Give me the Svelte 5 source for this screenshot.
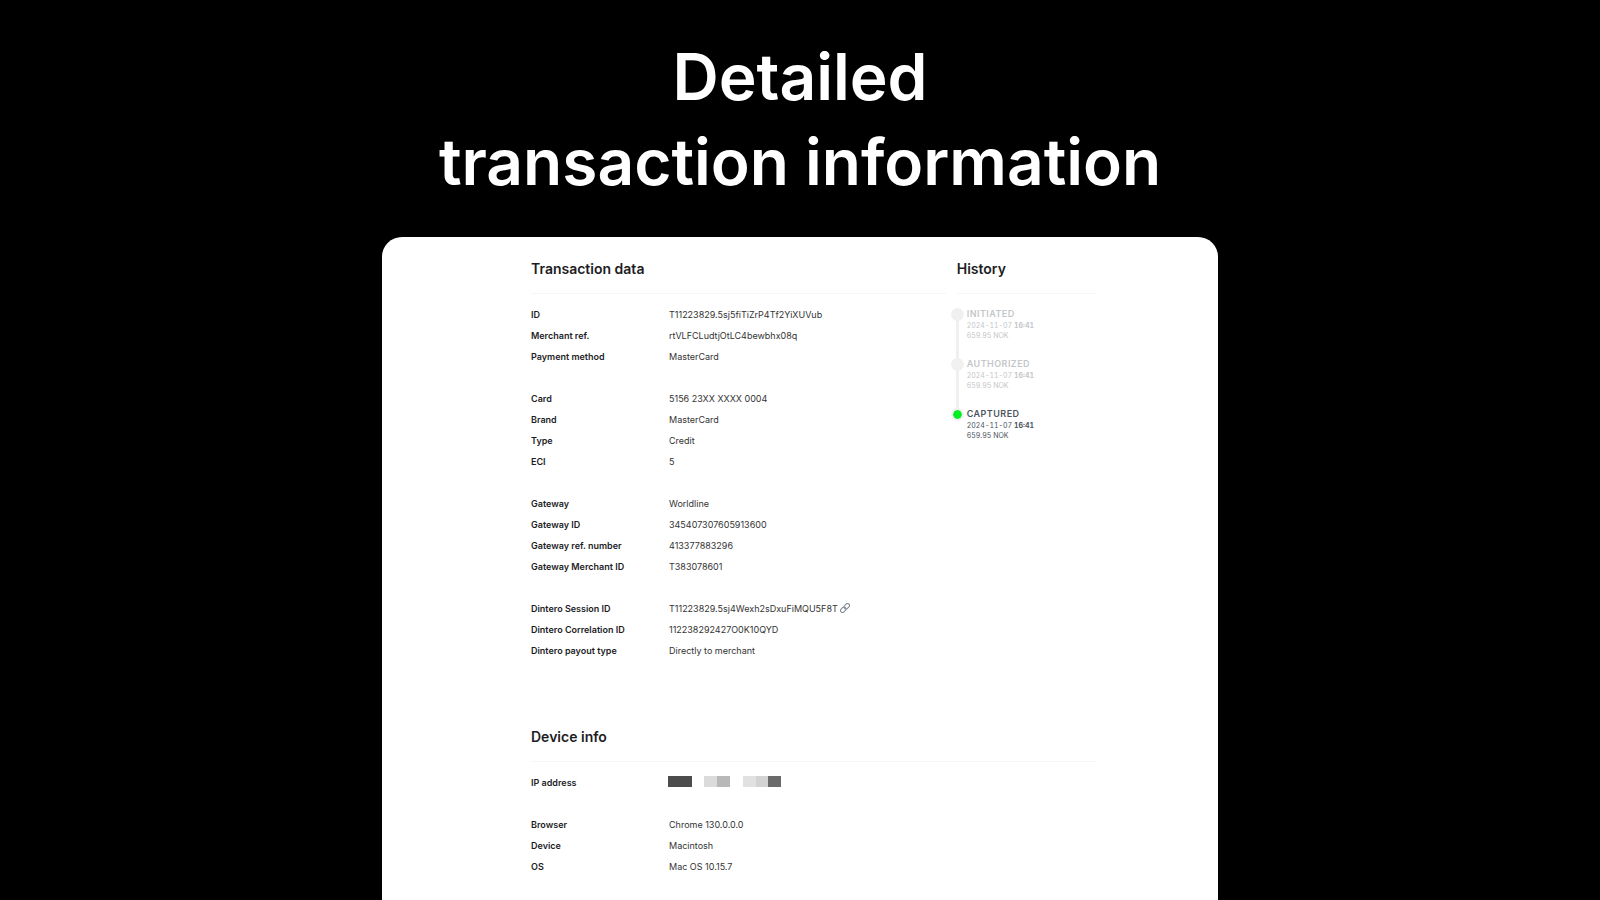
<script lang="ts">
  interface Row {
    label: string;
    value: string;
    link?: boolean;
    masked?: boolean;
  }

  const transaction: Row[][] = [
    [
      { label: "ID", value: "T11223829.5sj5fiTiZrP4Tf2YiXUVub" },
      { label: "Merchant ref.", value: "rtVLFCLudtjOtLC4bewbhx08q" },
      { label: "Payment method", value: "MasterCard" },
    ],
    [
      { label: "Card", value: "5156 23XX XXXX 0004" },
      { label: "Brand", value: "MasterCard" },
      { label: "Type", value: "Credit" },
      { label: "ECI", value: "5" },
    ],
    [
      { label: "Gateway", value: "Worldline" },
      { label: "Gateway ID", value: "345407307605913600" },
      { label: "Gateway ref. number", value: "413377883296" },
      { label: "Gateway Merchant ID", value: "T383078601" },
    ],
    [
      { label: "Dintero Session ID", value: "T11223829.5sj4Wexh2sDxuFiMQU5F8T", link: true },
      { label: "Dintero Correlation ID", value: "112238292427O0K10QYD" },
      { label: "Dintero payout type", value: "Directly to merchant" },
    ],
  ];

  const device: Row[][] = [
    [{ label: "IP address", value: "", masked: true }],
    [
      { label: "Browser", value: "Chrome 130.0.0.0" },
      { label: "Device", value: "Macintosh" },
      { label: "OS", value: "Mac OS 10.15.7" },
    ],
  ];

  const history = [
    { status: "INITIATED", date: "2024-11-07", time: "16:41", amount: "659.95 NOK" },
    { status: "AUTHORIZED", date: "2024-11-07", time: "16:41", amount: "659.95 NOK" },
    { status: "CAPTURED", date: "2024-11-07", time: "16:41", amount: "659.95 NOK", current: true },
  ];
</script>

{#snippet details(groups: Row[][])}
  <div class="groups">
    {#each groups as rows}
      <dl>
        {#each rows as row}
          <div class="row">
            <dt>{row.label}</dt>
            <dd>
              {#if row.masked}
                <svg class="mask" width="114" height="11" viewBox="0 0 114 11" aria-hidden="true">
                  <rect width="24" height="11" fill="#4c4c4c" />
                  <rect x="36" width="13" height="11" fill="#dbdbdb" />
                  <rect x="49" width="13" height="11" fill="#b8b8b8" />
                  <rect x="75" width="13" height="11" fill="#e1e1e1" />
                  <rect x="88" width="12" height="11" fill="#d3d3d3" />
                  <rect x="100" width="13" height="11" fill="#6a6a6a" />
                </svg>
              {:else if row.link}
                <a href="#session">
                  {row.value}
                  <svg width="10" height="10" viewBox="0 0 20 20" fill="none" aria-hidden="true">
                    <g transform="rotate(-45 10 10)" stroke="#7f8890" stroke-width="2">
                      <rect x="-1" y="6" width="12" height="8" rx="4" />
                      <rect x="9" y="6" width="12" height="8" rx="4" />
                    </g>
                  </svg>
                </a>
              {:else}
                {row.value}
              {/if}
            </dd>
          </div>
        {/each}
      </dl>
    {/each}
  </div>
{/snippet}

<main>
  <h1>Detailed<br />transaction information</h1>

  <div class="card">
    <div class="top">
      <section>
        <h2>Transaction data</h2>
        {@render details(transaction)}
      </section>

      <section>
        <h2>History</h2>
        <ol>
          {#each history as event}
            <li class:current={event.current}>
              <span class="dot"></span>
              <h3>{event.status}</h3>
              <p>{event.date} <strong>{event.time}</strong></p>
              <p>{event.amount}</p>
            </li>
          {/each}
        </ol>
      </section>
    </div>

    <section>
      <h2>Device info</h2>
      {@render details(device)}
    </section>
  </div>
</main>

<style>
  :global(body) {
    background: #000;
  }

  main {
    box-sizing: border-box;
    display: flex;
    flex-direction: column;
    align-items: center;
    height: 100vh;
    padding-top: 34px;
    overflow: hidden;
    font-family: Inter, "Liberation Sans", sans-serif;
  }

  h1 {
    margin: 0 0 33px;
    color: #fff;
    font-size: 64px;
    font-weight: 600;
    line-height: 85px;
    text-align: center;
  }

  .card {
    box-sizing: border-box;
    display: flex;
    flex-direction: column;
    flex: 1 0 auto;
    gap: 64px;
    width: 100%;
    max-width: 836px;
    padding: 20px 123px 20px 149px;
    border-radius: 20px 20px 0 0;
    background: #fff;
    color: #1d1d1f;
  }

  .top {
    display: grid;
    grid-template-columns: 3fr 1fr;
    gap: 11px;
  }

  h2 {
    margin: 0 0 10px;
    padding-bottom: 12px;
    border-bottom: 1px solid #f6f6f6;
    font-size: 14px;
    font-weight: 600;
    line-height: 24px;
  }

  .groups {
    display: flex;
    flex-direction: column;
    gap: 21px;
  }

  dl {
    margin: 0;
  }

  .row {
    display: grid;
    grid-template-columns: 138px 1fr;
    font-size: 9px;
    line-height: 21px;
  }

  dt {
    font-weight: 600;
  }

  dd {
    margin: 0;
    color: #333;
  }

  a {
    color: inherit;
    text-decoration: none;
  }

  a svg {
    vertical-align: -1px;
  }

  .mask {
    display: block;
    margin: 4px 0 0 -1px;
  }

  ol {
    margin: 0;
    padding: 0;
    list-style: none;
  }

  li {
    position: relative;
    height: 50px;
    padding-left: 10px;
    color: #4b5560;
  }

  li:not(.current) {
    color: #c4c7ca;
  }

  li:not(.current)::before {
    content: "";
    position: absolute;
    top: 10px;
    left: -1px;
    width: 3px;
    height: 50px;
    background: #f0f0f0;
  }

  .dot {
    position: absolute;
    top: 4px;
    left: -6px;
    width: 13px;
    height: 13px;
    border-radius: 50%;
    background: #f0f0f0;
  }

  .current .dot {
    box-sizing: border-box;
    border: 2px solid #f0f0f0;
    background: #00ee22;
    background-clip: padding-box;
  }

  h3 {
    margin: 0;
    padding-top: 4px;
    font-size: 9px;
    font-weight: 600;
    line-height: 12px;
    letter-spacing: 0.05em;
  }

  p {
    margin: 0;
    font-size: 7px;
    font-variant-numeric: tabular-nums;
    line-height: 10px;
  }

  p:first-of-type {
    padding-top: 1px;
  }
</style>
